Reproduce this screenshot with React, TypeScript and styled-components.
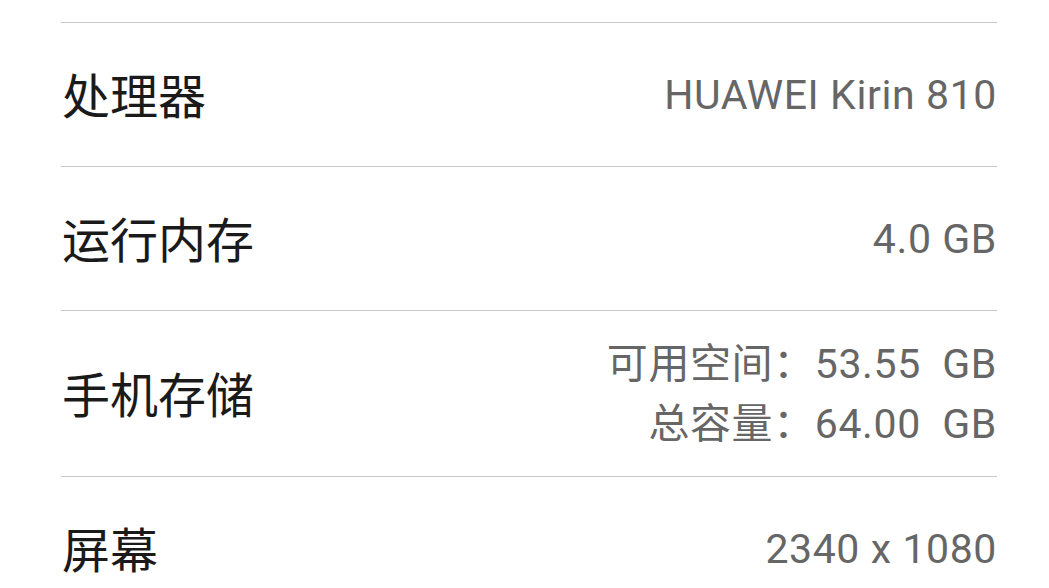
import React from "react";
import styled, { createGlobalStyle } from "styled-components";

const Global = createGlobalStyle`
  html, body { margin: 0; padding: 0; background: #ffffff; }
  body { font-family: Roboto, "Noto Sans CJK SC", sans-serif; -webkit-font-smoothing: antialiased; }
`;

const Page = styled.div`
  width: 1049px;
  height: 588px;
  overflow: hidden;
  background: #ffffff;
  padding: 22px 52px 0 61px;
  box-sizing: border-box;
`;

const List = styled.div`
  display: flex;
  flex-direction: column;
`;

const Row = styled.div<{ $tall?: boolean }>`
  display: flex;
  align-items: center;
  justify-content: space-between;
  border-top: 1px solid #c8c8c8;
  box-sizing: content-box;
  padding: ${(p) => (p.$tall ? "23px 0 22px" : "0")};
  min-height: ${(p) => (p.$tall ? "120px" : "143px")};
`;

const Label = styled.div`
  font-family: "Noto Sans CJK SC", sans-serif;
  font-size: 48px;
  color: #1a1a1a;
  line-height: 1;
  padding-left: 1px;
  padding-bottom: 4px;
`;

const Values = styled.div`
  display: flex;
  flex-direction: column;
  align-items: flex-end;
`;

const Value = styled.div`
  font-family: Roboto, "Noto Sans CJK SC", sans-serif;
  font-size: 41px;
  color: #666666;
  line-height: 60px;
  white-space: pre;
  letter-spacing: 0.6px;
`;

type Item = { label: string; values: string[] };

const items: Item[] = [
  { label: "处理器", values: ["HUAWEI Kirin 810"] },
  { label: "运行内存", values: ["4.0 GB"] },
  { label: "手机存储", values: ["可用空间：53.55  GB", "总容量：64.00  GB"] },
  { label: "屏幕", values: ["2340 x 1080"] },
];

export default function App() {
  return (
    <>
      <Global />
      <Page>
        <List>
          {items.map((it) => (
            <Row key={it.label} $tall={it.values.length > 1}>
              <Label>{it.label}</Label>
              <Values>
                {it.values.map((v) => (
                  <Value key={v}>{v}</Value>
                ))}
              </Values>
            </Row>
          ))}
        </List>
      </Page>
    </>
  );
}
